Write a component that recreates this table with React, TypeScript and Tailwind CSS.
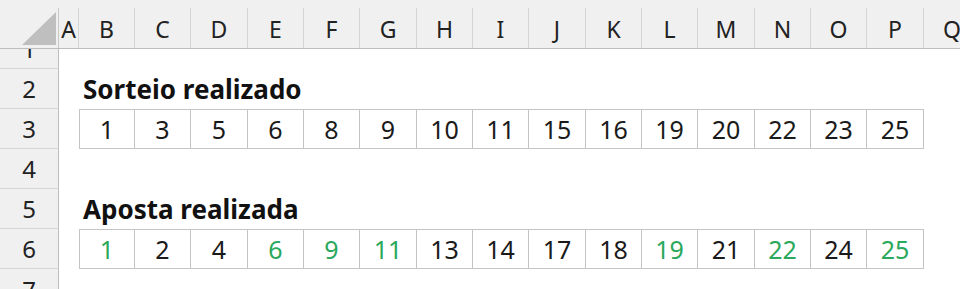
import React from "react";

const COLS = ["B","C","D","E","F","G","H","I","J","K","L","M","N","O","P"];
const W = ["w-[56px]","w-[56px]","w-[57px]","w-[56px]","w-[56px]","w-[57px]","w-[56px]","w-[56px]","w-[57px]","w-[56px]","w-[56px]","w-[57px]","w-[56px]","w-[56px]","w-[57px]"];
const SORTEIO = [1,3,5,6,8,9,10,11,15,16,19,20,22,23,25];
const APOSTA = [1,2,4,6,9,11,13,14,17,18,19,21,22,24,25];

const font = { fontFamily: '"Noto Sans", "Open Sans", sans-serif' };

function RowHead({ n, h, clipTop, clipBottom }: { n: number; h: string; clipTop?: boolean; clipBottom?: boolean }) {
  return (
    <div className={`w-[59px] shrink-0 ${h} bg-[#f0f0f0] border-r border-b border-r-[#bdbdbd] border-b-[#d6d6d6] overflow-hidden flex ${clipTop ? "items-end" : clipBottom ? "items-start" : "items-center"}`}>
      <div className="w-full h-[40px] shrink-0 flex items-center justify-center pt-[1px] text-[24px] text-[#222]">{n}</div>
    </div>
  );
}

function DataRow({ n, values, greenSet }: { n: number; values: number[]; greenSet?: Set<number> }) {
  return (
    <div className="flex h-[40px]">
      <RowHead n={n} h="h-[40px]" />
      <div className="w-[20px] shrink-0" />
      {values.map((v, i) => (
        <div
          key={i}
          className={`${W[i]} shrink-0 h-[40px] border-t border-b border-r border-[#c4c4c4] ${i === 0 ? "border-l" : ""} flex items-center justify-center pt-[1px] text-[25px] ${greenSet && greenSet.has(v) ? "text-[#2aa85c]" : "text-[#1a1a1a]"}`}
        >
          {v}
        </div>
      ))}
    </div>
  );
}

function TitleRow({ n, title }: { n: number; title: string }) {
  return (
    <div className="flex h-[40px]">
      <RowHead n={n} h="h-[40px]" />
      <div className="w-[20px] shrink-0" />
      <div className="flex items-center pl-[4px] text-[26px] font-bold text-[#111] whitespace-nowrap">{title}</div>
    </div>
  );
}

function EmptyRow({ n }: { n: number }) {
  return (
    <div className="flex h-[40px]">
      <RowHead n={n} h="h-[40px]" />
    </div>
  );
}

export default function App() {
  const sorteioSet = new Set(SORTEIO);
  return (
    <div className="w-[960px] h-[289px] overflow-hidden bg-white" style={font}>
      <div className="flex h-[49px] bg-[#f0f0f0] border-b border-[#bdbdbd]">
        <div className="w-[59px] shrink-0 flex flex-col pt-[8px]">
          <div className="flex-1 border-r border-[#c8c8c8] flex items-end justify-end pr-[2px] pb-[3px]">
            <svg width="34" height="33" viewBox="0 0 34 33">
              <polygon points="34,0 34,33 0,33" fill="#bfbfbf" />
            </svg>
          </div>
        </div>
        <div className="w-[20px] shrink-0 flex flex-col pt-[8px]">
          <div className="flex-1 border-r border-[#d4d4d4] flex items-center justify-center pt-[3px] text-[23px] text-[#222]">A</div>
        </div>
        {COLS.map((c, i) => (
          <div key={c} className={`${W[i]} shrink-0 flex flex-col pt-[8px]`}>
            <div className="flex-1 border-r border-[#d4d4d4] flex items-center justify-center pt-[3px] text-[23px] text-[#222]">{c}</div>
          </div>
        ))}
        <div className="w-[56px] shrink-0 flex flex-col pt-[8px]">
          <div className="flex-1 flex items-center justify-center pt-[3px] text-[23px] text-[#222]">Q</div>
        </div>
      </div>
      <div className="flex h-[20px]">
        <RowHead n={1} h="h-[20px]" clipTop />
      </div>
      <TitleRow n={2} title="Sorteio realizado" />
      <DataRow n={3} values={SORTEIO} />
      <EmptyRow n={4} />
      <TitleRow n={5} title="Aposta realizada" />
      <DataRow n={6} values={APOSTA} greenSet={sorteioSet} />
      <div className="flex h-[40px]">
        <RowHead n={7} h="h-[40px]" clipBottom />
      </div>
    </div>
  );
}
